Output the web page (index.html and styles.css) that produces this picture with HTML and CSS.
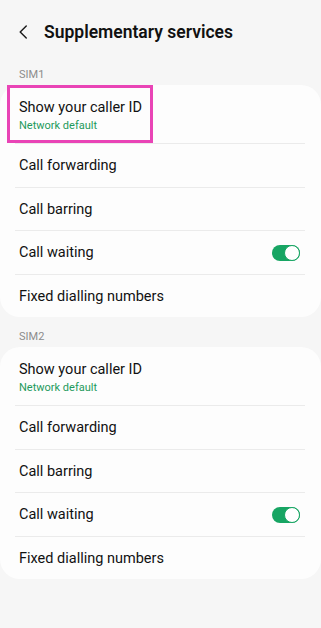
FILE: index.html
```html
<!DOCTYPE html>
<html lang="en">
<head>
<meta charset="utf-8">
<title>Supplementary services</title>
<link rel="stylesheet" href="styles.css">
</head>
<body>
<div class="screen">
  <header class="header">
    <svg class="back" width="9" height="14" viewBox="0 0 9 14" aria-hidden="true">
      <path d="M7.25 0.9 L1.2 7 L7.25 13.1" fill="none" stroke="#1a1a1a" stroke-width="1.4" stroke-linecap="round" stroke-linejoin="round"/>
    </svg>
    <h1 class="title">Supplementary services</h1>
  </header>

  <div class="section-label">SIM1</div>
  <div class="card">
    <div class="row row-tall">
      <span class="highlight"></span>
      <div class="row-text">
        <div class="row-title">Show your caller ID</div>
        <div class="row-sub">Network default</div>
      </div>
    </div>
    <div class="row"><div class="row-title">Call forwarding</div></div>
    <div class="row"><div class="row-title">Call barring</div></div>
    <div class="row">
      <div class="row-title">Call waiting</div>
      <span class="switch"><span class="knob"></span></span>
    </div>
    <div class="row"><div class="row-title">Fixed dialling numbers</div></div>
  </div>

  <div class="section-label section-label-2">SIM2</div>
  <div class="card">
    <div class="row row-tall">
      <div class="row-text">
        <div class="row-title">Show your caller ID</div>
        <div class="row-sub">Network default</div>
      </div>
    </div>
    <div class="row"><div class="row-title">Call forwarding</div></div>
    <div class="row"><div class="row-title">Call barring</div></div>
    <div class="row">
      <div class="row-title">Call waiting</div>
      <span class="switch"><span class="knob"></span></span>
    </div>
    <div class="row"><div class="row-title">Fixed dialling numbers</div></div>
  </div>
</div>
</body>
</html>
```

FILE: styles.css
```css
* { box-sizing: border-box; }
html, body {
  margin: 0;
  padding: 0;
  background: #f6f6f6;
}
body {
  font-family: Roboto, "Noto Sans", "Liberation Sans", sans-serif;
  color: #111111;
}
.screen {
  width: 321px;
  min-height: 628px;
  background: #f6f6f6;
}
.header {
  height: 64px;
  display: flex;
  align-items: center;
  padding-left: 19px;
}
.back {
  display: block;
}
.title {
  margin: 0 0 0 16px;
  font-size: 17.5px;
  font-weight: 600;
  color: #111111;
}
.section-label {
  height: 21px;
  padding-left: 19px;
  font-size: 11px;
  color: #8c8c8c;
  line-height: 22px;
}
.section-label-2 {
  height: 30px;
  line-height: 20px;
  padding-top: 10px;
}
.card {
  background: #fdfdfd;
  border-radius: 20px;
}
.row {
  position: relative;
  height: 43.5px;
  display: flex;
  align-items: center;
  justify-content: space-between;
  padding: 3px 21px 0 19px;
}
.row + .row::before {
  content: "";
  position: absolute;
  top: 0;
  left: 15px;
  right: 16px;
  height: 1px;
  background: #ebebeb;
}
.row-tall {
  height: 58px;
}
.row-title {
  font-size: 14.5px;
  line-height: 18px;
  color: #111111;
}
.row-sub {
  font-size: 11px;
  line-height: 15px;
  color: #1d9a5c;
  margin-top: 1px;
}
.highlight {
  position: absolute;
  left: 7px;
  top: 0;
  width: 146px;
  height: 58px;
  border: 3px solid #e944b6;
}
.switch {
  position: relative;
  width: 28px;
  height: 16px;
  border-radius: 8px;
  background: #17a563;
}
.knob {
  position: absolute;
  right: 0;
  top: 0;
  width: 16px;
  height: 16px;
  border-radius: 50%;
  background: #ffffff;
  border: 1.5px solid #17a563;
}
```
